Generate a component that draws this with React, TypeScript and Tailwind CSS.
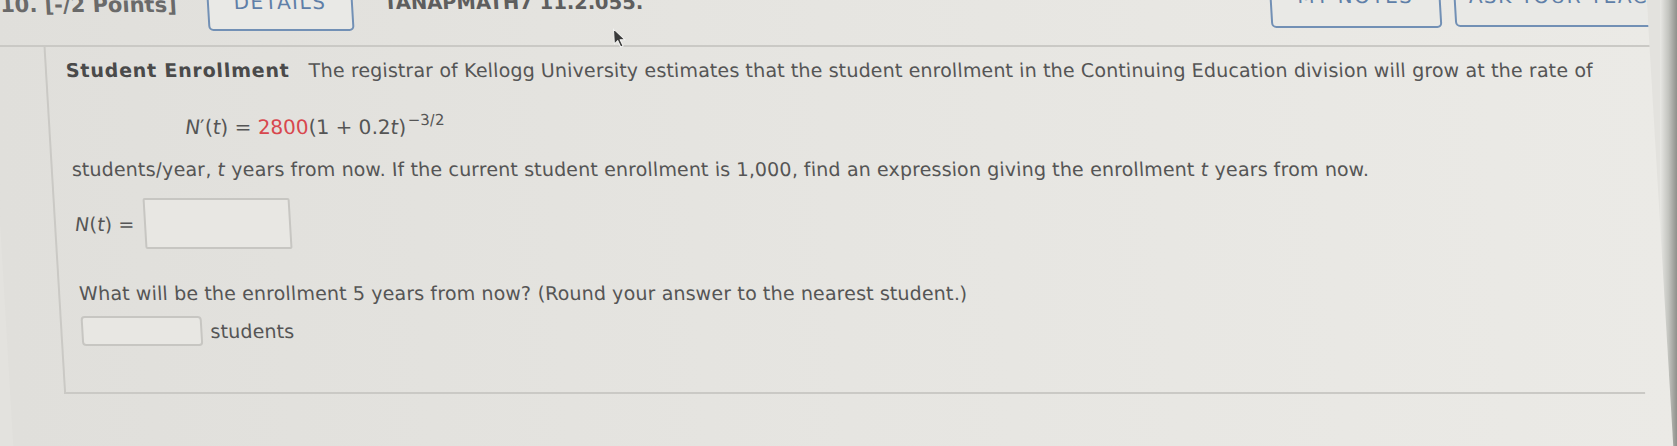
import React from "react";

function Cursor() {
  return (
    <svg
      className="absolute left-[624px] top-[28px]"
      width="13"
      height="21"
      viewBox="0 0 13 21"
    >
      <path
        d="M1 1 L1 16 L4.6 12.6 L7.2 19 L9.6 18 L7 11.8 L12 11.8 Z"
        fill="#3a3a3a"
        stroke="#f4f4f2"
        strokeWidth="1"
        strokeLinejoin="round"
      />
    </svg>
  );
}

export default function App() {
  return (
    <div className="flex h-[446px] w-full overflow-hidden bg-[#e3e2de] font-['DejaVu_Sans',sans-serif]">
      <div className="relative h-[446px] min-w-0 flex-1 skew-x-[3.4deg] bg-linear-to-r from-[#e0dfdb] via-[#e6e5e1] to-[#ebeae6]">
        <header className="flex h-[47px] items-start overflow-hidden border-b-2 border-[#cac9c5]">
          <span className="mt-[-7px] w-[220px] shrink-0 whitespace-nowrap pl-[13px] text-[21px] font-bold leading-[24px] text-[#6a6a6a]">
            10. [-/2 Points]
          </span>
          <div className="mt-[-15px] h-[46px] w-[146px] shrink-0 rounded-[5px] border-2 border-[#7290b5] bg-[#e9e9e6] pt-[3px] text-center text-[20px] leading-[24px] tracking-[1.5px] text-[#5f7fa8]">
            DETAILS
          </div>
          <span className="ml-[31px] mt-[-9px] w-[886px] shrink-0 whitespace-nowrap text-[19.5px] font-bold leading-[24px] text-[#5e5e5e]">
            TANAPMATH7 11.2.055.
          </span>
          <div className="mt-[-20px] h-[48px] w-[171px] shrink-0 rounded-[5px] border-2 border-[#7290b5] bg-[#e9e9e6] pt-[2px] text-center text-[20px] leading-[24px] tracking-[1.5px] text-[#5f7fa8]">
            MY NOTES
          </div>
          <div className="ml-[13px] mt-[-20px] h-[47px] w-[260px] shrink-0 whitespace-nowrap rounded-[5px] border-2 border-[#7290b5] bg-[#e9e9e6] pl-[13px] pt-[2px] text-[20px] leading-[24px] tracking-[1.5px] text-[#5f7fa8]">
            ASK YOUR TEACHER
          </div>
        </header>

        <section className="ml-[54px] w-[1581px] border-b-2 border-l-2 border-[#cac9c5] pb-[46px] pl-[19px] pt-[11px] text-[19px] leading-[24px] tracking-[0.15px] text-[#555555]">
          <p className="whitespace-nowrap">
            <b className="mr-[13px] font-bold tracking-[0.8px] text-[#4a4a4a]">Student Enrollment</b>{" "}
            The registrar of Kellogg University estimates that the student enrollment in the Continuing Education division will grow at the rate of
          </p>

          <p className="ml-[116px] mt-[33px] whitespace-nowrap text-[20px] tracking-normal">
            <i>N</i>′(<i>t</i>) = <span className="text-[#d8474e]">2800</span>(1 + 0.2<i>t</i>)
            <span className="relative -top-[9px] ml-[2px] text-[15px] leading-none">−3/2</span>
          </p>

          <p className="mt-[18px] whitespace-nowrap">
            students/year, <i>t</i> years from now. If the current student enrollment is 1,000, find an expression giving the enrollment <i>t</i> years from now.
          </p>

          <div className="mt-[17px] flex items-center">
            <span className="whitespace-nowrap">
              <i>N</i>(<i>t</i>) =
            </span>
            <div className="ml-[10px] h-[51px] w-[147px] rounded-[2px] border-2 border-[#c7c6c2] bg-[#e8e7e3]" />
          </div>

          <p className="mt-[32px] whitespace-nowrap">
            What will be the enrollment 5 years from now? (Round your answer to the nearest student.)
          </p>

          <div className="mt-[11px] flex items-center">
            <div className="h-[30px] w-[121px] rounded-[4px] border-2 border-[#c7c6c2] bg-[#e8e7e3]" />
            <span className="ml-[8px]">students</span>
          </div>
        </section>

        <Cursor />
      </div>
      <div className="h-[446px] w-[17px] shrink-0 bg-linear-to-r from-[#e8e8e4] via-[#c3c4bf] to-[#8f908b]" />
    </div>
  );
}
